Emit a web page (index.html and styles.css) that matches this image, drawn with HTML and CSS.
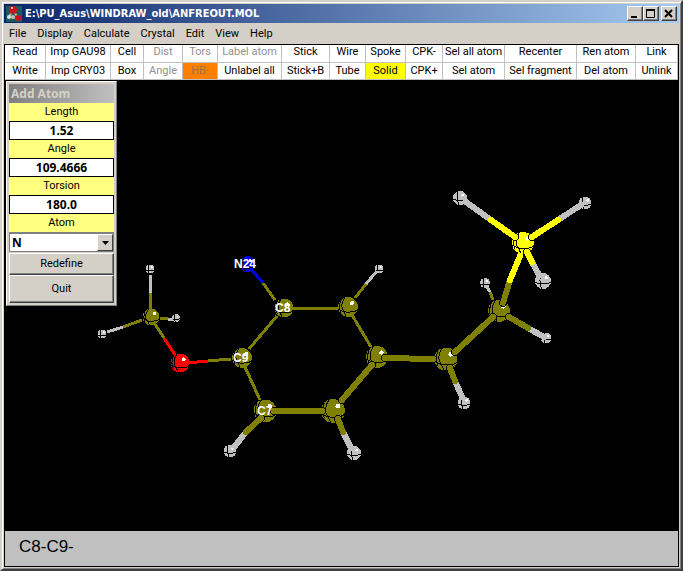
FILE: index.html
```html
<!DOCTYPE html>
<html lang="en">
<head>
<meta charset="utf-8">
<title>E:\PU_Asus\WINDRAW_old\ANFREOUT.MOL</title>
<link rel="stylesheet" href="styles.css">
</head>
<body>
<div class="window">
  <header class="titlebar">
    <svg class="app-icon" viewBox="0 0 16 16" aria-hidden="true">
      <rect width="16" height="16" fill="#1d5a5c"/>
      <path d="M3 11L7 4L12 12Z" fill="none" stroke="#9fb5b5" stroke-width="2"/>
      <circle cx="7" cy="4" r="4" fill="#c9141c"/><circle cx="6" cy="2" r="1" fill="#fff"/>
      <circle cx="3" cy="11" r="2" fill="#ddd"/><circle cx="7" cy="11" r="2" fill="#bbb"/>
      <circle cx="12" cy="12" r="3" fill="#c9141c"/>
    </svg>
    <h1 class="title">E:\PU_Asus\WINDRAW_old\ANFREOUT.MOL</h1>
    <div class="window-buttons">
      <button class="win-btn" aria-label="Minimize"><svg viewBox="0 0 12 10"><path d="M2 8H8" stroke="#000" stroke-width="2"/></svg></button>
      <button class="win-btn" aria-label="Maximize"><svg viewBox="0 0 12 10"><path d="M1 1H10" stroke="#000" stroke-width="2"/><path d="M1.500 1V8.500H9.500V1" fill="none" stroke="#000"/></svg></button>
      <button class="win-btn close" aria-label="Close"><svg viewBox="0 0 12 10"><path d="M2 1L9 8M9 1L2 8" stroke="#000" stroke-width="2"/></svg></button>
    </div>
  </header>
  <nav class="menu">
    <button>File</button><button>Display</button><button>Calculate</button><button>Crystal</button><button>Edit</button><button>View</button><button>Help</button>
  </nav>
  <main class="client">
    <div class="toolbar">
      <button class="top">Read</button><button class="top">Imp GAU98</button><button class="top">Cell</button><button class="top" disabled>Dist</button><button class="top" disabled>Tors</button><button class="top" disabled>Label atom</button><button class="top">Stick</button><button class="top">Wire</button><button class="top">Spoke</button><button class="top">CPK-</button><button class="top">Sel all atom</button><button class="top">Recenter</button><button class="top">Ren atom</button><button class="top">Link</button>
      <button>Write</button><button>Imp CRY03</button><button>Box</button><button disabled>Angle</button><button class="orange" disabled>HB-</button><button>Unlabel all</button><button>Stick+B</button><button>Tube</button><button class="yellow">Solid</button><button>CPK+</button><button>Sel atom</button><button>Sel fragment</button><button>Del atom</button><button>Unlink</button>
    </div>
    <div class="stage">
      <svg class="molecule" viewBox="5 80 673 451" preserveAspectRatio="xMinYMin meet" role="img" aria-label="Molecule model">
        <defs>
          <g id="atom">
            <circle r="10" fill="currentColor"/>
            <path class="seam" d="M-3 -10Q-9 -1 -4 5Q-2 9 -2 10M-10 2Q-4 6 2 5Q8 5 10 2M-7 -7Q-10 0 -7 6"/>
            <circle cx="4" cy="-4" r="2" fill="#fff"/>
          </g>
          <g id="hydrogen">
            <circle r="10" fill="currentColor"/>
            <path class="seam" d="M-3 -10Q-5 0 -2 10M-10 2Q0 5 10 2"/>
            <circle cx="4" cy="-4" r="2" fill="#fff"/>
          </g>
        </defs>
        <g class="carbon">
          <use href="#atom" transform="translate(151 317) scale(.85)"/>
          <use href="#atom" transform="translate(284 308) scale(.95)"/>
          <use href="#atom" transform="translate(348 307)"/>
          <use href="#atom" transform="translate(242 358)"/>
          <use href="#atom" transform="translate(377 357) scale(1.1)"/>
          <use href="#atom" transform="translate(265 411) scale(1.15)"/>
          <use href="#atom" transform="translate(333 411) scale(1.2)"/>
          <use href="#atom" transform="translate(446 359) scale(1.15)"/>
          <use href="#atom" transform="translate(499 311) scale(1.1)"/>
        </g>
        <use class="nitrogen" href="#atom" transform="translate(247 264) scale(.8)"/>
        <use class="oxygen" href="#atom" transform="translate(180 363) scale(.95)"/>
        <use class="silicon" href="#atom" transform="translate(523 243) scale(1.1)"/>
        <g class="hydro">
          <use href="#hydrogen" transform="translate(150 269) scale(.45)"/>
          <use href="#hydrogen" transform="translate(102 334) scale(.45)"/>
          <use href="#hydrogen" transform="translate(176 318) scale(.4)"/>
          <use href="#hydrogen" transform="translate(379 269) scale(.45)"/>
          <use href="#hydrogen" transform="translate(230 451) scale(.65)"/>
          <use href="#hydrogen" transform="translate(354 453) scale(.7)"/>
          <use href="#hydrogen" transform="translate(464 403) scale(.65)"/>
          <use href="#hydrogen" transform="translate(485 283) scale(.5)"/>
          <use href="#hydrogen" transform="translate(546 338) scale(.55)"/>
          <use href="#hydrogen" transform="translate(460 198) scale(.7)"/>
          <use href="#hydrogen" transform="translate(585 203) scale(.65)"/>
          <use href="#hydrogen" transform="translate(543 281) scale(.8)"/>
        </g>
        <g class="bonds carbon thin"><path d="M150 293V311M123 327L142 320M160 318L168 319M155 324L164 338M208 361L231 359M263 283L275 300M291 308H338M277 316L249 349M245 367L260 400M355 298L366 284M352 315L371 347M490 292L493 300"/></g>
        <g class="bonds hydro thin"><path d="M150 275V293M107 332L123 327M168 319H173M377 271L366 284M487 287L490 292"/></g>
        <g class="bonds nitrogen thin"><path d="M251 269L263 283"/></g>
        <g class="bonds oxygen thin"><path d="M164 338L175 355M186 363L208 361"/></g>
        <g class="edges"><path d="M372 365L342 400M274 411H322M261 418L246 432M338 419L343 432M385 358L433 359M455 352L493 317M450 368L455 381M509 317L528 328M503 303L510 280M515 237L491 220M532 237L558 220M527 252L532 262"/></g>
        <g class="bonds carbon thick"><path d="M372 365L342 400M274 411H322M385 358L433 359M455 352L493 317"/></g>
        <g class="bonds hydro"><path d="M246 432L235 446M343 432L351 448M455 381L462 397M528 328L544 337M491 220L466 202M558 220L581 205M532 262L539 275"/></g>
        <g class="bonds carbon"><path d="M261 418L246 432M338 419L343 432M450 368L455 381M509 317L528 328M503 303L510 280"/></g>
        <g class="bonds silicon"><path d="M510 280L520 256M515 237L491 220M532 237L558 220M527 252L532 262"/></g>
        <g class="labels"><text x="234" y="268">N24</text><text x="275" y="312">C8</text><text x="233" y="362">C9</text><text x="257" y="415">C7</text></g>
      </svg>
      <form class="dialog">
        <h2 class="dialog-title">Add Atom</h2>
        <label for="length">Length</label>
        <input id="length" type="text" value="1.52">
        <label for="angle">Angle</label>
        <input id="angle" type="text" value="109.4666">
        <label for="torsion">Torsion</label>
        <input id="torsion" type="text" value="180.0">
        <label for="atom-type">Atom</label>
        <div class="combo">
          <select id="atom-type"><option>N</option></select>
          <span class="combo-arrow"><svg viewBox="0 0 7 4"><path d="M0 0H7L3.500 4Z"/></svg></span>
        </div>
        <button type="button">Redefine</button>
        <button type="button" class="tall">Quit</button>
      </form>
    </div>
    <footer class="status">C8-C9-</footer>
  </main>
</div>
</body>
</html>
```
FILE: styles.css
```css
* { box-sizing: border-box; }
body {
  margin: 0;
  font: 11px/14px Roboto, "Liberation Sans", sans-serif;
  color: #000;
}
button, input, select {
  margin: 0;
  padding: 0;
  border: 0;
  border-radius: 0;
  font: inherit;
  color: inherit;
  background: none;
}
.window {
  display: flex;
  flex-direction: column;
  min-height: 100vh;
  padding: 2px;
  background: #d4d0c8;
  border: 2px solid;
  border-color: #d4d0c8 #404040 #404040 #d4d0c8;
  box-shadow: inset 1px 1px #fff, inset -1px -1px #808080;
}
.titlebar {
  display: flex;
  align-items: center;
  height: 19px;
  padding: 0 2px;
  background: linear-gradient(90deg, #0a246a, #a6caf0);
}
.app-icon { width: 16px; height: 16px; }
.title {
  flex: 1;
  margin: 0 0 0 3px;
  font: bold 11px/16px "DejaVu Sans Condensed", "Noto Sans", sans-serif;
  color: #fff;
  white-space: nowrap;
}
.window-buttons { display: flex; }
.win-btn {
  display: grid;
  place-items: center;
  width: 16px;
  height: 15px;
  background: #d4d0c8;
  border: 1px solid;
  border-color: #fff #404040 #404040 #fff;
  box-shadow: inset -1px -1px #808080;
}
.win-btn svg { width: 12px; height: 10px; }
.close { margin-left: 2px; }
.menu {
  display: flex;
  gap: 11px;
  height: 21px;
  padding: 0 5px;
}
.client {
  flex: 1;
  display: flex;
  flex-direction: column;
  background: #000;
  border: 1px solid #000;
}
.toolbar {
  display: grid;
  grid-template-columns:
    minmax(0, 41fr) minmax(0, 65fr) minmax(0, 33fr) minmax(0, 39fr) minmax(0, 35fr)
    minmax(0, 64fr) minmax(0, 48fr) minmax(0, 36fr) minmax(0, 40fr) minmax(0, 37fr)
    minmax(0, 62fr) minmax(0, 72fr) minmax(0, 59fr) minmax(0, 42fr);
  background: #fff;
}
.toolbar button {
  height: 17px;
  border: solid #c0c0c0;
  border-width: 0 1px 1px 0;
  white-space: nowrap;
}
.toolbar .top { height: 18px; padding-bottom: 3px; }
.toolbar button:disabled { color: #909090; }
.toolbar .orange { background: #ff8000; }
.toolbar .orange:disabled { color: #a07040; }
.toolbar .yellow { background: #ff0; }
.stage { position: relative; flex: 1; }
.molecule {
  position: absolute;
  inset: 0;
  width: 100%;
  height: 100%;
  shape-rendering: crispEdges;
}
.seam { fill: none; stroke: #000; stroke-width: 1; vector-effect: non-scaling-stroke; }
.carbon { color: #808000; }
.hydro { color: #c0c0c0; }
.nitrogen { color: #0000e8; }
.oxygen { color: #f00; }
.silicon { color: #ff0; }
.bonds { fill: none; stroke: currentColor; stroke-width: 6; stroke-linecap: round; }
.edges { fill: none; stroke: #000; stroke-width: 8; stroke-linecap: round; }
.thin { stroke-width: 3; stroke-linecap: butt; }
.thick { stroke-width: 6; }
.labels { fill: #fff; font: bold 12px "Liberation Sans", sans-serif; }
.dialog {
  position: absolute;
  top: 1px;
  left: 1px;
  display: flex;
  flex-direction: column;
  width: 111px;
  padding: 2px;
  background: #d4d0c8;
  border: 1px solid;
  border-color: #fff #808080 #808080 #fff;
}
.dialog-title {
  margin: 0;
  padding: 0 2px;
  font: bold 12px/19px "Noto Sans", sans-serif;
  color: #d4d0c8;
  background: linear-gradient(90deg, #808080, #c0c0c0);
}
.dialog label {
  height: 18px;
  line-height: 17px;
  text-align: center;
  background: #ffff80;
}
.dialog input {
  width: 100%;
  height: 19px;
  font: bold 12px "Noto Sans", sans-serif;
  text-align: center;
  background: #fff;
  border: 1px solid #000;
}
.combo {
  display: grid;
  height: 20px;
  margin-bottom: 1px;
  background: #fff;
  border: 1px solid #808080;
  border-top-width: 2px;
}
.combo select {
  grid-area: 1 / 1;
  padding-left: 2px;
  appearance: none;
  font: bold 12px "Noto Sans", sans-serif;
}
.combo-arrow {
  grid-area: 1 / 1;
  justify-self: end;
  display: grid;
  place-items: center;
  width: 16px;
  background: #d4d0c8;
  border: 1px solid;
  border-color: #fff #404040 #404040 #fff;
  pointer-events: none;
}
.combo-arrow svg { width: 7px; height: 4px; }
.dialog button {
  height: 22px;
  background: #d4d0c8;
  border: 1px solid;
  border-color: #fff #404040 #404040 #fff;
  box-shadow: inset -1px -1px #808080;
}
.dialog .tall { height: 28px; }
.status {
  height: 35px;
  padding: 0 14px;
  font: 17px/32px "Liberation Sans", Arial, sans-serif;
  background: #c0c0c0;
}
```
